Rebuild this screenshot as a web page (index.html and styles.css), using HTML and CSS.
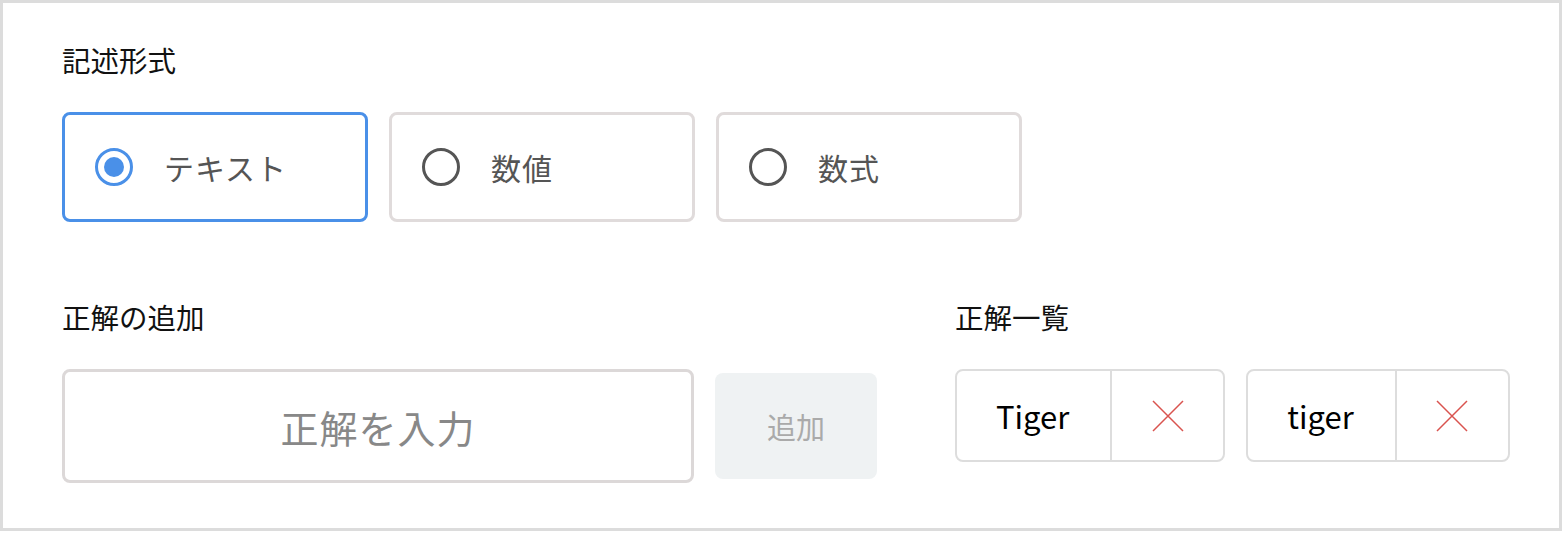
FILE: index.html
```html
<!DOCTYPE html>
<html lang="ja">
<head>
<meta charset="utf-8">
<title>記述形式</title>
<link rel="stylesheet" href="styles.css">
</head>
<body>
<div class="frame">
  <div class="section-title">記述形式</div>
  <div class="radio-group">
    <label class="radio-card selected">
      <span class="radio-circle"><span class="radio-dot"></span></span>
      <span class="radio-label">テキスト</span>
    </label>
    <label class="radio-card">
      <span class="radio-circle"></span>
      <span class="radio-label">数値</span>
    </label>
    <label class="radio-card">
      <span class="radio-circle"></span>
      <span class="radio-label">数式</span>
    </label>
  </div>
  <div class="bottom">
    <div class="add-col">
      <div class="section-title">正解の追加</div>
      <div class="add-row">
        <div class="answer-input">正解を入力</div>
        <div class="add-btn">追加</div>
      </div>
    </div>
    <div class="list-col">
      <div class="section-title">正解一覧</div>
      <div class="chips">
        <div class="chip">
          <span class="chip-text">Tiger</span>
          <span class="chip-del"><svg width="32" height="32" viewBox="0 0 32 32"><path d="M1 1 L31 31 M31 1 L1 31" stroke="#d9534f" stroke-width="1.5" fill="none"/></svg></span>
        </div>
        <div class="chip">
          <span class="chip-text">tiger</span>
          <span class="chip-del"><svg width="32" height="32" viewBox="0 0 32 32"><path d="M1 1 L31 31 M31 1 L1 31" stroke="#d9534f" stroke-width="1.5" fill="none"/></svg></span>
        </div>
      </div>
    </div>
  </div>
</div>
</body>
</html>
```

FILE: styles.css
```css
html, body {
  margin: 0;
  padding: 0;
  background: #ffffff;
}

body {
  font-family: "Noto Sans CJK JP", "Noto Sans", sans-serif;
  color: #111111;
}

.frame {
  box-sizing: border-box;
  width: 1562px;
  height: 531px;
  border: 3px solid #dcdcdc;
  padding: 37px 60px 0 59px;
}

.section-title {
  font-size: 28.5px;
  line-height: 40px;
  height: 40px;
  color: #111111;
  margin-bottom: 32px;
}

.radio-group {
  display: flex;
  gap: 21px;
}

.radio-card {
  box-sizing: border-box;
  width: 306px;
  height: 110px;
  border: 3px solid #e0dbdb;
  border-radius: 8px;
  display: flex;
  align-items: center;
  padding-left: 30px;
  gap: 31px;
}

.radio-card.selected {
  border-color: #4a90e8;
}

.radio-circle {
  box-sizing: border-box;
  width: 38px;
  height: 38px;
  border: 3px solid #555555;
  border-radius: 50%;
  display: flex;
  align-items: center;
  justify-content: center;
  flex: none;
}

.selected .radio-circle {
  border-color: #4a90e8;
}

.radio-dot {
  width: 20px;
  height: 20px;
  border-radius: 50%;
  background: #4a90e8;
}

.radio-label {
  font-size: 30px;
  color: #555555;
  letter-spacing: 1px;
}

.bottom {
  display: flex;
  margin-top: 75px;
  gap: 78px;
}

.add-col {
  width: 815px;
}

.add-row {
  display: flex;
  align-items: center;
  gap: 21px;
}

.answer-input {
  box-sizing: border-box;
  width: 633px;
  height: 114px;
  border: 3px solid #dcd8d8;
  border-radius: 8px;
  display: flex;
  align-items: center;
  justify-content: center;
  font-size: 38px;
  letter-spacing: 1px;
  color: #888888;
}

.add-btn {
  width: 162px;
  height: 106px;
  background: #eff2f3;
  border-radius: 8px;
  display: flex;
  align-items: center;
  justify-content: center;
  font-size: 29px;
  color: #aaaaaa;
}

.chips {
  display: flex;
  gap: 21px;
}

.chip {
  box-sizing: border-box;
  height: 93px;
  border: 2px solid #dddddd;
  border-radius: 8px;
  display: flex;
  align-items: stretch;
}

.chip-text {
  display: flex;
  align-items: center;
  padding: 0 41px 0 39px;
  font-size: 31px;
  color: #000000;
}

.chip-del {
  width: 111px;
  border-left: 2px solid #dddddd;
  display: flex;
  align-items: center;
  justify-content: center;
}
```
